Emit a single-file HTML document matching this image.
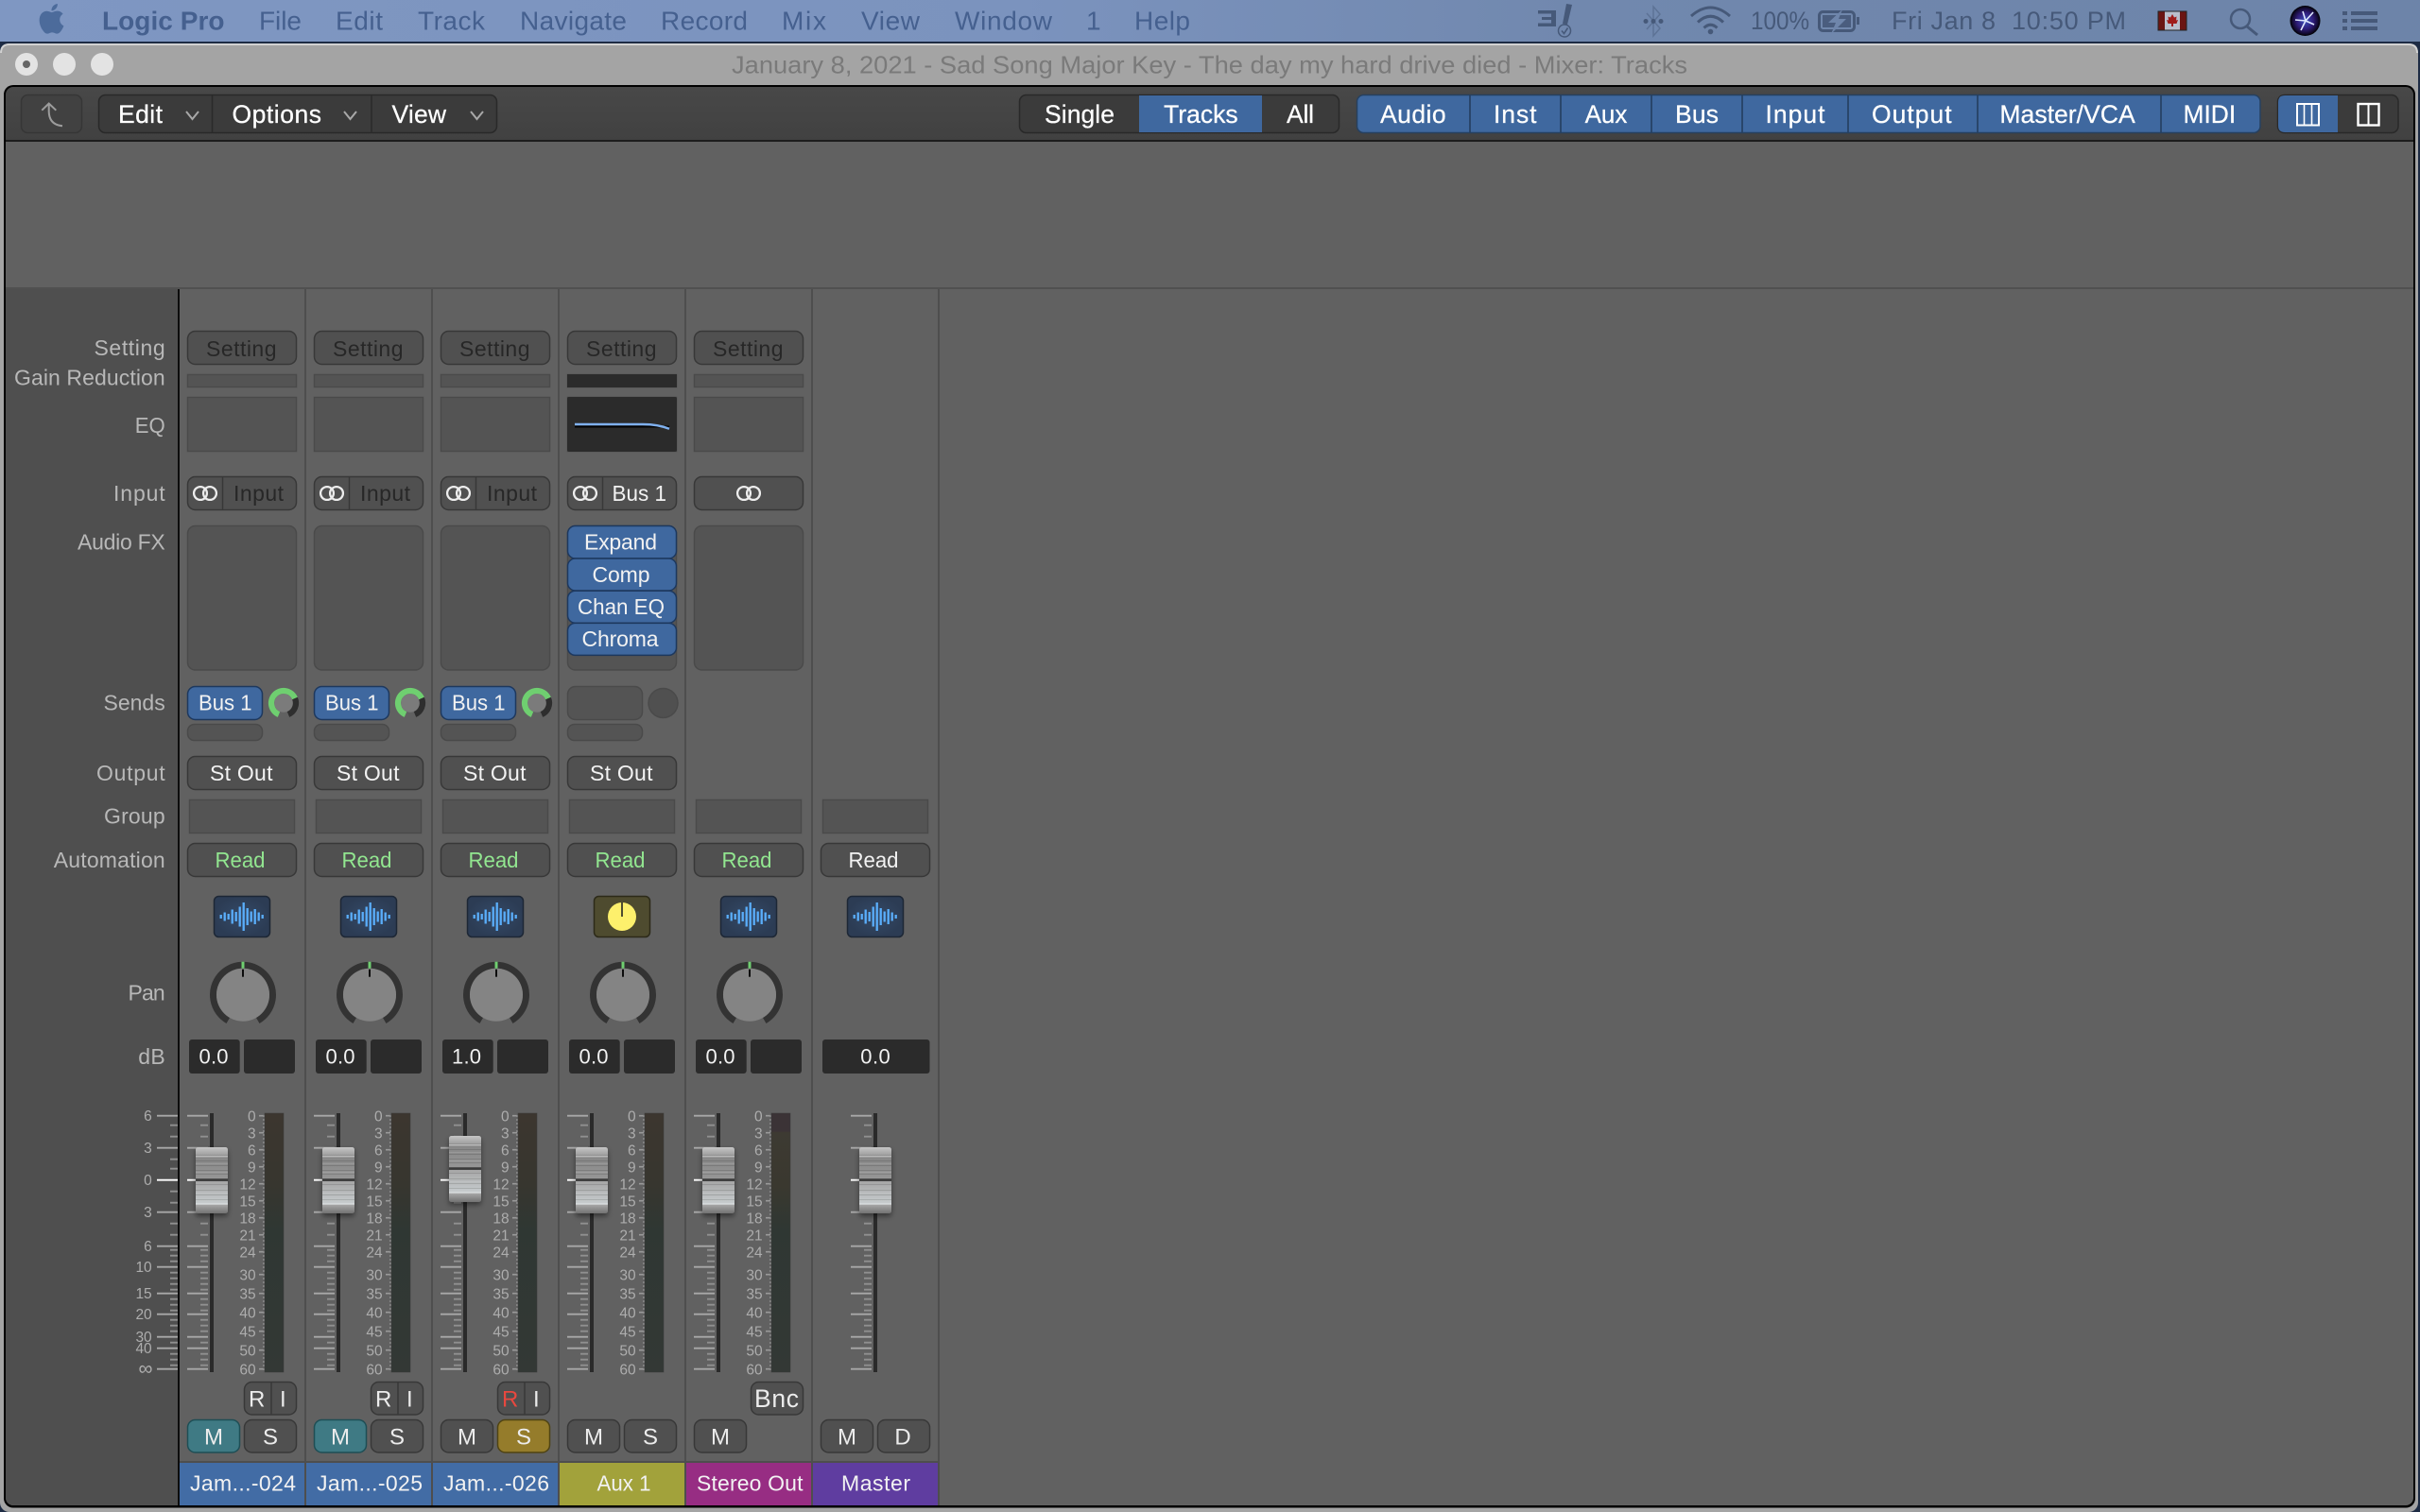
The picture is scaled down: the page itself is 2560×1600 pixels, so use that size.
<!DOCTYPE html>
<html><head><meta charset="utf-8"><title>Logic Pro Mixer</title>
<style>
html,body{margin:0;padding:0;background:#1d2b44;width:2560px;height:1600px;overflow:hidden}
svg{display:block}
text{font-family:"Liberation Sans",sans-serif}
.mn{font-size:28px;fill:#45608f}
.mr{font-size:27px;fill:#465979}
.tb{font-size:26.5px;fill:#fff;stroke:#fff;stroke-width:.25}
.lb{font-size:23px;fill:#b8b8b8}
.bt{font-size:23px;fill:#272727}
.wt{font-size:23px;fill:#f2f2f2}
.gn{font-size:23px;fill:#92e690}
.db{font-size:22px;fill:#f2f2f2}
.ms{font-size:24px;fill:#ececec;text-anchor:middle}
.rn{font-size:24px;fill:#ececec}
.tn{font-size:23px;fill:#f2f2f2}
.nm{font-size:15.5px;fill:#adadad;text-anchor:end}
.b{fill:#505050;stroke:#383838;stroke-width:1.5}
.e{fill:#545454;stroke:#4a4a4a;stroke-width:1.5}
.x{fill:#2b2b2b}
.pl{fill:#3f689f;stroke:#1d385e;stroke-width:1.5}
.rg{fill:none;stroke:#ededed;stroke-width:2.3}
.mi{fill:none;stroke:#465979}
</style></head><body>
<svg xmlns="http://www.w3.org/2000/svg" width="2560" height="1600" viewBox="0 0 2560 1600">
<defs>
<linearGradient id="bar" x1="0" x2="1" y1="0" y2="0"><stop offset="0" stop-color="#7f97c2"/><stop offset=".42" stop-color="#7b93be"/><stop offset=".65" stop-color="#7188ae"/><stop offset="1" stop-color="#6d84a9"/></linearGradient>
<linearGradient id="tbg" x1="0" x2="0" y1="0" y2="1"><stop offset="0" stop-color="#484848"/><stop offset="1" stop-color="#414141"/></linearGradient>
<linearGradient id="k" x1="0" x2="0" y1="0" y2="1">
<stop offset="0" stop-color="#c6c6c6"/><stop offset=".11" stop-color="#a2a2a2"/><stop offset=".125" stop-color="#8e8e8e"/><stop offset=".14" stop-color="#c8c8c8"/><stop offset=".155" stop-color="#878787"/>
<stop offset=".47" stop-color="#969696"/><stop offset=".48" stop-color="#3a3a3a"/><stop offset=".51" stop-color="#3a3a3a"/><stop offset=".515" stop-color="#a6a6a6"/>
<stop offset=".85" stop-color="#c7ccce"/><stop offset=".855" stop-color="#eaeff1"/><stop offset=".875" stop-color="#a4a4a4"/><stop offset="1" stop-color="#727272"/></linearGradient>
<linearGradient id="m" x1="0" x2="0" y1="0" y2="1"><stop offset="0" stop-color="#3c362f"/><stop offset=".28" stop-color="#37362f"/><stop offset=".45" stop-color="#2f3733"/><stop offset="1" stop-color="#333835"/></linearGradient>
<linearGradient id="ms" x1="0" x2="0" y1="0" y2="1"><stop offset="0" stop-color="#3b3336"/><stop offset=".07" stop-color="#3b3336"/><stop offset=".075" stop-color="#3d3a32"/><stop offset=".28" stop-color="#3a382f"/><stop offset=".45" stop-color="#2f3733"/><stop offset="1" stop-color="#333835"/></linearGradient>
<radialGradient id="ic"><stop offset="0" stop-color="#344a68"/><stop offset="1" stop-color="#2c3c54"/></radialGradient>
<radialGradient id="siri"><stop offset="0" stop-color="#3d52c0"/><stop offset=".55" stop-color="#2e1c78"/><stop offset=".85" stop-color="#120a30"/><stop offset="1" stop-color="#000"/></radialGradient>
<filter id="sh" x="-30%" y="-30%" width="160%" height="160%"><feDropShadow dx="0" dy="3" stdDeviation="3" flood-color="#000" flood-opacity=".45"/></filter>
<clipPath id="cc"><rect x="6" y="92" width="2547" height="1501" rx="8"/></clipPath>

<g id="scale" fill="none">
<path stroke="#a8a8a8" stroke-width="1.8" d="M8 1180.7H30M8 1214.7H30M8 1282.7H30M8 1318.7H30M8 1340.7H30M8 1368.7H30M8 1390.7H30M8 1414.7H30M8 1426.7H30M8 1448.7H30"/>
<path stroke="#909090" stroke-width="1.8" d="M22 1190.7H30M22 1202.7H30M22 1226.7H30M22 1236.7H30M22 1260.7H30M22 1272.7H30M22 1294.7H30M22 1306.7H30M22 1322.7H30M22 1328.7H30M22 1334.7H30M22 1346.7H30M22 1352.7H30M22 1358.7H30M22 1364.7H30M22 1374.7H30M22 1380.7H30M22 1386.7H30M22 1396.7H30M22 1402.7H30M22 1408.7H30M22 1420.7H30M22 1432.7H30M22 1438.7H30M22 1444.7H30"/>
<path stroke="#fff" stroke-width="1.8" d="M8 1248.7H30"/>
</g>
<g id="fader">
<use href="#scale"/>
<rect x="32" y="1178" width="4" height="274" fill="#2a2a2a"/>
</g>
<g id="knob">
<g filter="url(#sh)"><rect x="0" y="0" width="34" height="70" rx="2.5" fill="url(#k)"/></g>
<path stroke="#000" stroke-opacity=".12" stroke-width="1" d="M0 14.5H34M0 19.5H34M0 24.5H34M0 28.5H34M0 39.5H34M0 45.5H34M0 50.5H34M0 55.5H34"/>
<path stroke="#fff" stroke-opacity=".12" stroke-width="1" d="M0 17.5H34M0 26.5H34M0 48.5H34"/>
</g>
<g id="meter" fill="none">
<path stroke="#999" stroke-width="1.6" d="M84 1180.7H89M84 1198.7H89M84 1216.7H89M84 1234.7H89M84 1252.7H89M84 1270.7H89M84 1288.7H89M84 1306.7H89M84 1324.7H89M84 1348.7H89M84 1368.7H89M84 1388.7H89M84 1408.7H89M84 1428.7H89M84 1448.7H89"/>
<path stroke="#8e8e8e" stroke-width="1.6" stroke-dasharray="2 2" d="M89 1180V1450"/>
</g>
<g id="base">
<rect class="b" x="8.5" y="350.5" width="115" height="35" rx="8"/>
<rect class="e" x="8.5" y="396.5" width="115" height="13"/>
<rect class="e" x="8.5" y="420.5" width="115" height="57"/>
<rect class="e" x="8.5" y="556.5" width="115" height="152.5" rx="8"/>
</g>
<g id="inp">
<rect class="b" x="8.5" y="504.5" width="115" height="35" rx="8"/>
<path stroke="#383838" stroke-width="1.5" d="M45.5 505V539"/>
<circle class="rg" cx="22" cy="522" r="6.9"/><circle class="rg" cx="32" cy="522" r="6.9"/>
</g>
<g id="send">
<rect class="pl" x="8.5" y="726.5" width="79" height="35" rx="8"/>
<rect class="e" x="8.5" y="766.5" width="79" height="17" rx="7"/>
<g transform="translate(110,744)"><circle r="9.8" fill="#7b7b7b"/><path fill="none" stroke="#6fcf70" stroke-width="6.2" d="M-5 12A13 13 0 1 1 12 -5"/><path fill="none" stroke="#2e2e2e" stroke-width="6.2" d="M12 -5A13 13 0 0 1 5 12"/></g>
</g>
<rect id="out" class="b" x="8.5" y="800.5" width="115" height="35" rx="8"/>
<rect id="grp" class="e" x="10.5" y="846.5" width="111" height="35"/>
<rect id="aut" class="b" x="8.5" y="892.5" width="115" height="35" rx="8"/>
<g id="wave">
<rect x="36.5" y="948.5" width="59" height="43" rx="5" fill="url(#ic)" stroke="#1d2735" stroke-width="1.5"/>
<path fill="none" stroke="#5aaefb" stroke-width="2.3" d="M43.7 968V972M47.7 965.5V974.5M51.7 967V973M55.7 962.5V977.5M59.7 965V975M63.7 959.5V980.5M67.7 955V985M71.7 961V979M75.7 964.5V975.5M79.7 962V978M83.7 965.5V974.5M87.7 968V972"/>
</g>
<g id="pan">
<path fill="none" stroke="#333" stroke-width="7" d="M-15.75 27.3A31.5 31.5 0 1 1 15.75 27.3"/>
<circle r="28" fill="#848484"/>
<path stroke="#6fcf70" stroke-width="3" d="M0 -35V-28"/>
<path stroke="#0c0c0c" stroke-width="2" d="M0 -27V-19"/>
</g>
<g id="dbb"><rect class="x" x="10" y="1100" width="53.7" height="36" rx="3"/><rect class="x" x="68" y="1100" width="54" height="36" rx="3"/></g>
<g id="ri"><rect class="b" x="68.5" y="1462.5" width="55" height="34.5" rx="8"/><path stroke="#383838" stroke-width="1.5" d="M97 1463V1497"/></g>
<rect id="mb" class="b" x="8.5" y="1502.5" width="55" height="34.5" rx="8"/>
<rect id="sb" class="b" x="68.5" y="1502.5" width="55" height="34.5" rx="8"/>
</defs>

<rect width="2560" height="1600" fill="#1d2b44"/>
<!-- menu bar -->
<rect width="2560" height="44" fill="url(#bar)"/>
<path fill="#4c6b9b" transform="translate(38.7,4) scale(1.32)" d="M12.152 6.896c-.948 0-2.415-1.078-3.96-1.04-2.04.027-3.91 1.183-4.961 3.014-2.117 3.675-.546 9.103 1.519 12.09 1.013 1.454 2.208 3.09 3.792 3.039 1.52-.065 2.09-.987 3.935-.987 1.831 0 2.35.987 3.96.948 1.637-.026 2.676-1.48 3.676-2.948 1.156-1.688 1.636-3.325 1.662-3.415-.039-.013-3.182-1.221-3.22-4.857-.026-3.04 2.48-4.494 2.597-4.559-1.429-2.09-3.623-2.324-4.39-2.376-2-.156-3.675 1.09-4.61 1.09zM15.53 3.83c.843-1.012 1.4-2.427 1.245-3.83-1.207.052-2.662.805-3.532 1.818-.78.896-1.454 2.338-1.273 3.714 1.338.104 2.715-.688 3.559-1.701"/>
<text class="mn" x="108" y="31.5" font-weight="700" textLength="129.5">Logic Pro</text>
<text class="mn" x="274" y="31.5" textLength="45">File</text>
<text class="mn" x="355" y="31.5" textLength="50">Edit</text>
<text class="mn" x="442" y="31.5" textLength="71">Track</text>
<text class="mn" x="550" y="31.5" textLength="113">Navigate</text>
<text class="mn" x="699" y="31.5" textLength="92">Record</text>
<text class="mn" x="827" y="31.5" textLength="47">Mix</text>
<text class="mn" x="911" y="31.5" textLength="62">View</text>
<text class="mn" x="1010" y="31.5" textLength="103">Window</text>
<text class="mn" x="1149" y="31.5">1</text>
<text class="mn" x="1200" y="31.5" textLength="59">Help</text>
<!-- status icons -->
<path fill="#465979" d="M1627 11H1646V28H1627V24.5H1641V21H1631V18H1641V14.5H1627Z"/>
<path fill="#465979" d="M1657 4L1663 5L1658 26L1653 25Z"/>
<circle class="mi" cx="1655" cy="32.5" r="6.5" stroke-width="1.5"/><path class="mi" stroke-width="1.6" d="M1652 32.5L1654.5 35.5L1658.5 29.5"/>
<path fill="none" stroke="#5d7396" stroke-width="1.5" d="M1742 14L1756 30L1749 38V7L1756 15L1742 31"/>
<circle cx="1741" cy="22.5" r="2.5" fill="#465979"/><circle cx="1749" cy="22.5" r="2.5" fill="#465979"/><circle cx="1757" cy="22.5" r="2.5" fill="#465979"/>
<path class="mi" stroke-width="3" d="M1789 17Q1809.5 -1 1830 17M1796 23.5Q1809.5 11 1823 23.5M1802.5 29.5Q1809.5 23 1816.5 29.5"/>
<circle cx="1809.5" cy="33.5" r="2.8" fill="#465979"/>
<text class="mr" x="1852" y="31" textLength="62" lengthAdjust="spacingAndGlyphs">100%</text>
<rect class="mi" x="1924.5" y="12.5" width="37" height="20" rx="4" stroke-width="3"/>
<rect x="1964" y="18" width="3" height="8" fill="#465979"/>
<rect x="1928" y="16" width="30" height="13" fill="#465979" opacity=".9"/>
<path fill="#6f86ab" d="M1949 10L1934 24H1942L1937 36L1953 20H1945Z"/>
<text class="mr" x="2001" y="31" textLength="110">Fri Jan 8</text>
<text class="mr" x="2128" y="31" textLength="121">10:50 PM</text>
<rect x="2283" y="12" width="30" height="20" fill="#b9bfcc" stroke="#222" stroke-width="1"/>
<rect x="2283.5" y="12.5" width="6.5" height="19" fill="#6a1512"/><rect x="2306" y="12.5" width="6.5" height="19" fill="#6a1512"/>
<path fill="#a01c1a" d="M2298 15L2300 18.5L2302.5 17.5L2302 21.5L2304 21L2302.5 25L2299 25V28H2297V25L2293.5 25L2292 21L2294 21.5L2293.5 17.5L2296 18.5Z"/>
<circle class="mi" cx="2370" cy="20" r="10" stroke-width="2.5"/>
<path class="mi" stroke-width="3" d="M2377 28L2388 37"/>
<circle cx="2438.5" cy="22" r="16" fill="url(#siri)"/>
<path fill="none" stroke="#dfe8ff" stroke-width="1.6" d="M2439 22L2447 13M2439 22L2434 32M2439 22L2428 21M2439 22L2448 26M2439 22L2436 12"/>
<path fill="#465979" d="M2478 12H2483V16H2478ZM2487 12H2515V16H2487ZM2478 20H2483V24H2478ZM2487 20H2515V24H2487ZM2478 28H2483V32H2478ZM2487 28H2515V32H2487Z"/>

<!-- window -->
<rect x="0" y="46" width="2558" height="1554" rx="10" fill="#a4a4a4"/>
<path d="M1 56Q1 47 10 47H2548Q2557 47 2557 56" fill="none" stroke="#d2d2d2" stroke-width="2"/>
<circle cx="28" cy="68" r="12" fill="#e3e3e3"/><circle cx="28" cy="68" r="4" fill="#666"/>
<circle cx="68" cy="68" r="12" fill="#e3e3e3"/><circle cx="108" cy="68" r="12" fill="#e3e3e3"/>
<text x="774" y="77.5" font-size="26" fill="#7a7a7a" textLength="1011" lengthAdjust="spacingAndGlyphs">January 8, 2021 - Sad Song Major Key - The day my hard drive died - Mixer: Tracks</text>
<rect x="4" y="90" width="2551" height="1505.5" rx="10" fill="#000"/>
<g clip-path="url(#cc)">
<rect x="6" y="92" width="2547" height="56" fill="url(#tbg)"/>
<rect x="6" y="148" width="2547" height="2" fill="#1c1c1c"/>
<rect x="6" y="150" width="2547" height="1445" fill="#616161"/>
<rect x="6" y="304" width="2547" height="2" fill="#505050"/>
<rect x="6" y="306" width="182" height="1290" fill="#4f4f4f"/>
<rect x="188" y="306" width="2" height="1290" fill="#0d0d0d"/>
<path stroke="#4e4e4e" stroke-width="2" d="M323 306V1595M457 306V1595M591 306V1595M725 306V1595M859 306V1595M993 306V1595"/>
<rect x="190" y="1546" width="804" height="2" fill="#4e4e4e"/>
</g>

<!-- toolbar -->
<rect x="22.5" y="100.5" width="64" height="40" rx="7" fill="#414141" stroke="#363636" stroke-width="1.5"/>
<path fill="none" stroke="#9c9c9c" stroke-width="2" d="M44.3 116.7L51.7 109.5L59.3 116.7M51.7 110V118Q52 132 66 133.3"/>
<rect x="104.5" y="100.5" width="421" height="40" rx="7" fill="#3b3b3b" stroke="#292929" stroke-width="1.5"/>
<path stroke="#2a2a2a" stroke-width="1.5" d="M224.5 101V140M393 101V140"/>
<text class="tb" x="125" y="130" textLength="47">Edit</text>
<text class="tb" x="245.5" y="130" textLength="94.5">Options</text>
<text class="tb" x="414.5" y="130" textLength="57.5">View</text>
<path fill="none" stroke="#a8a8a8" stroke-width="2" d="M197 118L203.5 126L210 118M364 118L370.5 126L377 118M498 118L504.5 126L511 118"/>

<rect x="1078.5" y="100.5" width="338" height="40" rx="7" fill="#3b3b3b" stroke="#292929" stroke-width="1.5"/>
<rect x="1205" y="101" width="130" height="39" fill="#3f689f"/>
<text class="tb" x="1105" y="130" textLength="74">Single</text>
<text class="tb" x="1231" y="130" textLength="78.6">Tracks</text>
<text class="tb" x="1361" y="130" textLength="29">All</text>

<rect x="1435.5" y="100.5" width="955.5" height="40" rx="7" fill="#3f689f" stroke="#26405f" stroke-width="1.5"/>
<path stroke="#223a5a" stroke-width="1.5" d="M1555 101V140M1651 101V140M1747 101V140M1843 101V140M1955 101V140M2092 101V140M2286 101V140"/>
<text class="tb" x="1460" y="130" textLength="69.6">Audio</text>
<text class="tb" x="1580" y="130" textLength="45.5">Inst</text>
<text class="tb" x="1676.6" y="130" textLength="44.8" lengthAdjust="spacingAndGlyphs">Aux</text>
<text class="tb" x="1772" y="130" textLength="46">Bus</text>
<text class="tb" x="1867.5" y="130" textLength="63">Input</text>
<text class="tb" x="1980" y="130" textLength="84.6">Output</text>
<text class="tb" x="2115.4" y="130" textLength="143.3" lengthAdjust="spacingAndGlyphs">Master/VCA</text>
<text class="tb" x="2309.5" y="130" textLength="55.7" lengthAdjust="spacingAndGlyphs">MIDI</text>

<rect x="2409.5" y="100.5" width="127.5" height="40" rx="7" fill="#3b3b3b" stroke="#292929" stroke-width="1.5"/>
<path d="M2473 101H2417Q2410 101 2410 108V133Q2410 140 2417 140H2473Z" fill="#3f689f"/>
<g fill="none" stroke="#fff"><rect x="2430" y="110" width="23" height="22.5" stroke-width="2"/><path stroke-width="1.6" d="M2437.5 110V132.5M2445.5 110V132.5"/>
<rect x="2494.5" y="110" width="22" height="22.5" stroke-width="2.4"/><path stroke-width="2" d="M2505.5 110V132.5"/></g>

<!-- strip backgrounds -->
<use href="#base" x="190"/><use href="#base" x="324"/><use href="#base" x="458"/><use href="#base" x="592"/><use href="#base" x="726"/>
<use href="#inp" x="190"/><use href="#inp" x="324"/><use href="#inp" x="458"/><use href="#inp" x="592"/>
<rect class="b" x="734.5" y="504.5" width="115" height="35" rx="8"/>
<circle class="rg" cx="787" cy="522" r="6.9"/><circle class="rg" cx="797" cy="522" r="6.9"/>

<!-- aux overrides -->
<rect x="600" y="396" width="116" height="14" class="x"/>
<rect x="600" y="420" width="116" height="58" rx="2" class="x"/>
<path stroke="#000" stroke-width="2" d="M608 451.5H708"/>
<path fill="none" stroke="#7fb0ee" stroke-width="2.4" d="M608 449H680Q696 449 708 453.8"/>
<rect class="pl" x="600.5" y="556.5" width="115" height="34.5" rx="8"/>
<rect class="pl" x="600.5" y="591" width="115" height="34" rx="8"/>
<rect class="pl" x="600.5" y="625.2" width="115" height="34" rx="8"/>
<rect class="pl" x="600.5" y="659.4" width="115" height="34" rx="8"/>

<!-- sends -->
<use href="#send" x="190"/><use href="#send" x="324"/><use href="#send" x="458"/>
<rect class="e" x="600.5" y="726.5" width="79" height="35" rx="8"/>
<rect class="e" x="600.5" y="766.5" width="79" height="17" rx="7"/>
<circle class="e" cx="701.5" cy="744" r="15.5" style="fill:#505050"/>

<use href="#out" x="190"/><use href="#out" x="324"/><use href="#out" x="458"/><use href="#out" x="592"/>
<use href="#grp" x="190"/><use href="#grp" x="324"/><use href="#grp" x="458"/><use href="#grp" x="592"/><use href="#grp" x="726"/><use href="#grp" x="860"/>
<use href="#aut" x="190"/><use href="#aut" x="324"/><use href="#aut" x="458"/><use href="#aut" x="592"/><use href="#aut" x="726"/><use href="#aut" x="860"/>
<use href="#wave" x="190"/><use href="#wave" x="324"/><use href="#wave" x="458"/><use href="#wave" x="726"/><use href="#wave" x="860"/>
<rect x="628.5" y="948.5" width="59" height="43" rx="5" fill="#4e4b2f" stroke="#2c2a19" stroke-width="1.5"/>
<circle cx="658" cy="970" r="15" fill="#fdf06c"/>
<path stroke="#222" stroke-width="1.6" d="M658 955V970"/>
<use href="#pan" x="257" y="1052.7"/><use href="#pan" x="391" y="1052.7"/><use href="#pan" x="525" y="1052.7"/><use href="#pan" x="659" y="1052.7"/><use href="#pan" x="793" y="1052.7"/>
<use href="#dbb" x="190"/><use href="#dbb" x="324"/><use href="#dbb" x="458"/><use href="#dbb" x="592"/><use href="#dbb" x="726"/>
<rect class="x" x="870" y="1100" width="113.5" height="36" rx="3"/>

<!-- faders -->
<use href="#scale" x="158"/>
<use href="#fader" x="190"/><use href="#fader" x="324"/><use href="#fader" x="458"/><use href="#fader" x="592"/><use href="#fader" x="726"/><use href="#fader" x="892"/>
<use href="#knob" x="207" y="1214"/><use href="#knob" x="341" y="1214"/><use href="#knob" x="475" y="1202"/><use href="#knob" x="609" y="1214"/><use href="#knob" x="743" y="1214"/><use href="#knob" x="909" y="1214"/>

<!-- meters -->
<use href="#meter" x="190"/><use href="#meter" x="324"/><use href="#meter" x="458"/><use href="#meter" x="592"/><use href="#meter" x="726"/>
<rect x="280" y="1178" width="20" height="274" fill="url(#m)" stroke="#3a3a3a" stroke-width=".5"/>
<rect x="414" y="1178" width="20" height="274" fill="url(#m)" stroke="#3a3a3a" stroke-width=".5"/>
<rect x="548" y="1178" width="20" height="274" fill="url(#m)" stroke="#3a3a3a" stroke-width=".5"/>
<rect x="682" y="1178" width="20" height="274" fill="url(#m)" stroke="#3a3a3a" stroke-width=".5"/>
<rect x="816" y="1178" width="20" height="274" fill="url(#ms)" stroke="#3a3a3a" stroke-width=".5"/>

<!-- buttons -->
<use href="#ri" x="190"/><use href="#ri" x="324"/><use href="#ri" x="458"/>
<rect class="b" x="794.5" y="1462.5" width="55" height="34.5" rx="8"/>
<rect x="198.5" y="1502.5" width="55" height="34.5" rx="8" fill="#3f7a84" stroke="#1e4e55" stroke-width="1.5"/>
<rect x="332.5" y="1502.5" width="55" height="34.5" rx="8" fill="#3f7a84" stroke="#1e4e55" stroke-width="1.5"/>
<use href="#sb" x="190"/><use href="#sb" x="324"/><use href="#mb" x="458"/>
<rect x="526.5" y="1502.5" width="55" height="34.5" rx="8" fill="#957c2b" stroke="#4f4313" stroke-width="1.5"/>
<use href="#mb" x="592"/><use href="#sb" x="592"/><use href="#mb" x="726"/><use href="#mb" x="860"/><use href="#sb" x="860"/>

<!-- track names -->
<rect x="190" y="1548" width="132" height="45" fill="#426ca5"/>
<rect x="324" y="1548" width="132" height="45" fill="#426ca5"/>
<rect x="458" y="1548" width="132" height="45" fill="#426ca5"/>
<rect x="592" y="1548" width="132" height="45" fill="#a2a23b"/>
<rect x="726" y="1548" width="132" height="45" fill="#972d83"/>
<rect x="860" y="1548" width="132" height="45" fill="#5f3da0"/>
<text class="tn" x="201" y="1577.3" textLength="112">Jam...-024</text>
<text class="tn" x="335" y="1577.3" textLength="112">Jam...-025</text>
<text class="tn" x="469" y="1577.3" textLength="112">Jam...-026</text>
<text class="tn" x="631.5" y="1577.3" textLength="57" lengthAdjust="spacingAndGlyphs">Aux 1</text>
<text class="tn" x="737" y="1577.3" textLength="112.5">Stereo Out</text>
<text class="tn" x="890" y="1577.3" textLength="73">Master</text>

<!-- column labels -->
<text class="lb" x="99.5" y="376" textLength="75.2">Setting</text>
<text class="lb" x="15" y="407.7" textLength="159.7">Gain Reduction</text>
<text class="lb" x="142.7" y="458" textLength="32" lengthAdjust="spacingAndGlyphs">EQ</text>
<text class="lb" x="120" y="530" textLength="54.7">Input</text>
<text class="lb" x="82" y="581.7" textLength="92.7">Audio FX</text>
<text class="lb" x="109.5" y="751.7" textLength="65.2">Sends</text>
<text class="lb" x="102" y="826" textLength="72.7">Output</text>
<text class="lb" x="110" y="871.7" textLength="64.7">Group</text>
<text class="lb" x="56.8" y="918" textLength="117.9">Automation</text>
<text class="lb" x="135.5" y="1058.3" textLength="39.2">Pan</text>
<text class="lb" x="146.2" y="1126" textLength="28.5">dB</text>

<!-- left scale numbers -->
<g class="nm">
<text class="nm" x="160.7" y="1186.2">6</text><text class="nm" x="160.7" y="1220.2">3</text><text class="nm" x="160.7" y="1254.2">0</text><text class="nm" x="160.7" y="1288.2">3</text><text class="nm" x="160.7" y="1324.2">6</text><text class="nm" x="160.7" y="1346.2">10</text><text class="nm" x="160.7" y="1374.2">15</text><text class="nm" x="160.7" y="1396.2">20</text><text class="nm" x="160.7" y="1420.2">30</text><text class="nm" x="160.7" y="1432.2">40</text><text class="nm" x="161.5" y="1455" style="font-size:21px">∞</text>
</g>

<!-- strip text -->
<text class="bt" x="218" y="377" textLength="74.5">Setting</text><text class="bt" x="352" y="377" textLength="74.5">Setting</text><text class="bt" x="486" y="377" textLength="74.5">Setting</text><text class="bt" x="620" y="377" textLength="74.5">Setting</text><text class="bt" x="754" y="377" textLength="74.5">Setting</text>
<text class="bt" x="247" y="530" textLength="53">Input</text><text class="bt" x="381" y="530" textLength="53">Input</text><text class="bt" x="515" y="530" textLength="53">Input</text><text class="wt" x="647.5" y="530" textLength="57.5" lengthAdjust="spacingAndGlyphs">Bus 1</text>
<text class="wt" x="618" y="581.7" textLength="77">Expand</text>
<text class="wt" x="626.5" y="616" textLength="61">Comp</text>
<text class="wt" x="611" y="650" textLength="92" lengthAdjust="spacingAndGlyphs">Chan EQ</text>
<text class="wt" x="615.5" y="684" textLength="81">Chroma</text>
<text class="wt" x="210" y="751.7" textLength="56.5" lengthAdjust="spacingAndGlyphs">Bus 1</text><text class="wt" x="344" y="751.7" textLength="56.5" lengthAdjust="spacingAndGlyphs">Bus 1</text><text class="wt" x="478" y="751.7" textLength="56.5" lengthAdjust="spacingAndGlyphs">Bus 1</text>
<text class="wt" x="222" y="826" textLength="66.5">St Out</text><text class="wt" x="356" y="826" textLength="66.5">St Out</text><text class="wt" x="490" y="826" textLength="66.5">St Out</text><text class="wt" x="624" y="826" textLength="66.5">St Out</text>
<text class="gn" x="227.5" y="918" textLength="53" lengthAdjust="spacingAndGlyphs">Read</text><text class="gn" x="361.5" y="918" textLength="53" lengthAdjust="spacingAndGlyphs">Read</text><text class="gn" x="495.5" y="918" textLength="53" lengthAdjust="spacingAndGlyphs">Read</text><text class="gn" x="629.5" y="918" textLength="53" lengthAdjust="spacingAndGlyphs">Read</text><text class="gn" x="763.5" y="918" textLength="53" lengthAdjust="spacingAndGlyphs">Read</text><text class="wt" x="897.5" y="918" textLength="53" lengthAdjust="spacingAndGlyphs">Read</text>
<text class="db" x="210.5" y="1125.3" textLength="31">0.0</text><text class="db" x="344.5" y="1125.3" textLength="31">0.0</text><text class="db" x="478" y="1125.3" textLength="31">1.0</text><text class="db" x="612.5" y="1125.3" textLength="31">0.0</text><text class="db" x="746.5" y="1125.3" textLength="31">0.0</text><text class="db" x="910.2" y="1125.3" textLength="31.6">0.0</text>

<text class="rn" x="263" y="1488.3">R</text><text class="ms" x="299.3" y="1488.3">I</text>
<text class="rn" x="397" y="1488.3">R</text><text class="ms" x="433.3" y="1488.3">I</text>
<text class="rn" x="531" y="1488.3" style="fill:#e8483f">R</text><text class="ms" x="567.3" y="1488.3">I</text>
<text class="rn" x="798" y="1489" style="font-size:26.5px" textLength="47">Bnc</text>
<text class="ms" x="226" y="1528.3">M</text><text class="ms" x="286" y="1528.3">S</text>
<text class="ms" x="360" y="1528.3">M</text><text class="ms" x="420" y="1528.3">S</text>
<text class="ms" x="494" y="1528.3">M</text><text class="ms" x="554" y="1528.3">S</text>
<text class="ms" x="628" y="1528.3">M</text><text class="ms" x="688" y="1528.3">S</text>
<text class="ms" x="762" y="1528.3">M</text>
<text class="ms" x="896" y="1528.3">M</text><text class="ms" x="955" y="1528.3">D</text>

<!-- meter numbers -->
<g>
<text class="nm" x="270.6" y="1186.3">0</text><text class="nm" x="270.6" y="1204.3">3</text><text class="nm" x="270.6" y="1222.3">6</text><text class="nm" x="270.6" y="1240.3">9</text><text class="nm" x="270.6" y="1258.3">12</text><text class="nm" x="270.6" y="1276.3">15</text><text class="nm" x="270.6" y="1294.3">18</text><text class="nm" x="270.6" y="1312.3">21</text><text class="nm" x="270.6" y="1330.3">24</text><text class="nm" x="270.6" y="1354.3">30</text><text class="nm" x="270.6" y="1374.3">35</text><text class="nm" x="270.6" y="1394.3">40</text><text class="nm" x="270.6" y="1414.3">45</text><text class="nm" x="270.6" y="1434.3">50</text><text class="nm" x="270.6" y="1454.3">60</text>
</g>
<g>
<text class="nm" x="404.6" y="1186.3">0</text><text class="nm" x="404.6" y="1204.3">3</text><text class="nm" x="404.6" y="1222.3">6</text><text class="nm" x="404.6" y="1240.3">9</text><text class="nm" x="404.6" y="1258.3">12</text><text class="nm" x="404.6" y="1276.3">15</text><text class="nm" x="404.6" y="1294.3">18</text><text class="nm" x="404.6" y="1312.3">21</text><text class="nm" x="404.6" y="1330.3">24</text><text class="nm" x="404.6" y="1354.3">30</text><text class="nm" x="404.6" y="1374.3">35</text><text class="nm" x="404.6" y="1394.3">40</text><text class="nm" x="404.6" y="1414.3">45</text><text class="nm" x="404.6" y="1434.3">50</text><text class="nm" x="404.6" y="1454.3">60</text>
</g>
<g>
<text class="nm" x="538.6" y="1186.3">0</text><text class="nm" x="538.6" y="1204.3">3</text><text class="nm" x="538.6" y="1222.3">6</text><text class="nm" x="538.6" y="1240.3">9</text><text class="nm" x="538.6" y="1258.3">12</text><text class="nm" x="538.6" y="1276.3">15</text><text class="nm" x="538.6" y="1294.3">18</text><text class="nm" x="538.6" y="1312.3">21</text><text class="nm" x="538.6" y="1330.3">24</text><text class="nm" x="538.6" y="1354.3">30</text><text class="nm" x="538.6" y="1374.3">35</text><text class="nm" x="538.6" y="1394.3">40</text><text class="nm" x="538.6" y="1414.3">45</text><text class="nm" x="538.6" y="1434.3">50</text><text class="nm" x="538.6" y="1454.3">60</text>
</g>
<g>
<text class="nm" x="672.6" y="1186.3">0</text><text class="nm" x="672.6" y="1204.3">3</text><text class="nm" x="672.6" y="1222.3">6</text><text class="nm" x="672.6" y="1240.3">9</text><text class="nm" x="672.6" y="1258.3">12</text><text class="nm" x="672.6" y="1276.3">15</text><text class="nm" x="672.6" y="1294.3">18</text><text class="nm" x="672.6" y="1312.3">21</text><text class="nm" x="672.6" y="1330.3">24</text><text class="nm" x="672.6" y="1354.3">30</text><text class="nm" x="672.6" y="1374.3">35</text><text class="nm" x="672.6" y="1394.3">40</text><text class="nm" x="672.6" y="1414.3">45</text><text class="nm" x="672.6" y="1434.3">50</text><text class="nm" x="672.6" y="1454.3">60</text>
</g>
<g>
<text class="nm" x="806.6" y="1186.3">0</text><text class="nm" x="806.6" y="1204.3">3</text><text class="nm" x="806.6" y="1222.3">6</text><text class="nm" x="806.6" y="1240.3">9</text><text class="nm" x="806.6" y="1258.3">12</text><text class="nm" x="806.6" y="1276.3">15</text><text class="nm" x="806.6" y="1294.3">18</text><text class="nm" x="806.6" y="1312.3">21</text><text class="nm" x="806.6" y="1330.3">24</text><text class="nm" x="806.6" y="1354.3">30</text><text class="nm" x="806.6" y="1374.3">35</text><text class="nm" x="806.6" y="1394.3">40</text><text class="nm" x="806.6" y="1414.3">45</text><text class="nm" x="806.6" y="1434.3">50</text><text class="nm" x="806.6" y="1454.3">60</text>
</g>
</svg>
</body></html>
